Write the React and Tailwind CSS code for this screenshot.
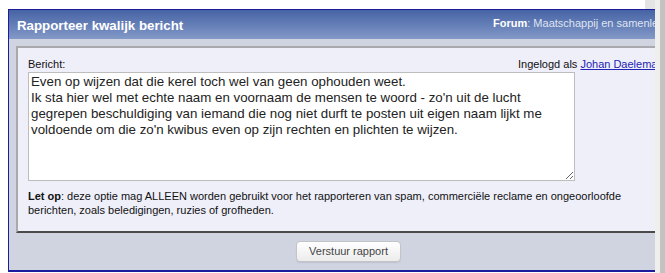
import React from "react";

export default function App() {
  const text =
    "Even op wijzen dat die kerel toch wel van geen ophouden weet.\nIk sta hier wel met echte naam en voornaam de mensen te woord - zo'n uit de lucht\ngegrepen beschuldiging van iemand die nog niet durft te posten uit eigen naam lijkt me\nvoldoende om die zo'n kwibus even op zijn rechten en plichten te wijzen.";
  return (
    <div className="flex w-[665px] h-[273px] overflow-hidden bg-white font-['Liberation_Sans',Arial,sans-serif]">
      <div className="w-[655px] shrink-0 flex flex-col overflow-hidden">
        <div className="h-[9px] shrink-0 flex justify-end">
          <div className="w-[10px] bg-[#e4e4e4]" />
        </div>
        <div className="ml-[8px] w-[720px] shrink-0 border-l border-t border-b-2 border-[#1c1c9c] bg-[#d0d3e0] flex flex-col">
          <div className="h-[29px] flex items-start bg-gradient-to-b from-[#4663a5] to-[#8399c7] text-white">
            <div className="w-[484px] shrink-0 pl-[8px] pt-[8px] text-[13.3px] leading-[16px] font-bold whitespace-nowrap">
              Rapporteer kwalijk bericht
            </div>
            <div className="pt-[7px] text-[11px] leading-[13px] whitespace-nowrap">
              <span className="font-bold">Forum</span>
              <span className="text-[#dfe4f2]">: Maatschappij en samenleving</span>
            </div>
          </div>
          <div className="pt-[7px] pl-[7px]">
            <div className="border-l-2 border-t-2 border-[#a9a9ad] border-b-2 border-b-[#4a4a4a] bg-[#efeffa] pl-[10px] pt-[10px] pb-[14px]">
              <div className="flex text-[11px] leading-[13px] text-[#111] whitespace-nowrap">
                <div className="w-[490px] shrink-0">Bericht:</div>
                <div>
                  Ingelogd als{" "}
                  <a className="text-[#2323b4] underline">Johan Daelemans</a>
                </div>
              </div>
              <textarea
                className="mt-[1px] block w-[547px] h-[109px] border border-[#bdbdbd] bg-white pl-[2px] pt-[1px] text-[13.3px] leading-[16px] text-[#222] font-['Liberation_Sans',Arial,sans-serif] whitespace-pre overflow-hidden outline-none"
                defaultValue={text}
                spellCheck={false}
              />
              <div className="mt-[8px] text-[11px] leading-[14px] text-[#111] w-[600px]">
                <span className="font-bold">Let op</span>: deze optie mag ALLEEN worden gebruikt voor het rapporteren van spam, commerciële reclame en ongeoorloofde
                <br />
                berichten, zoals beledigingen, ruzies of grofheden.
              </div>
            </div>
          </div>
          <div className="flex pl-[287px] pt-[8px] pb-[8px]">
            <button className="h-[21px] w-[105px] rounded-[4px] border border-[#c4c4c8] bg-gradient-to-b from-white to-[#ececec] text-[11px] text-[#444] shadow-[0_1px_1px_rgba(0,0,0,0.08)]">
              Verstuur rapport
            </button>
          </div>
        </div>
      </div>
      <div className="w-[5px] shrink-0 bg-[#f0efed]" />
      <div className="w-[5px] shrink-0 bg-[#c2c2c2]" />
    </div>
  );
}
